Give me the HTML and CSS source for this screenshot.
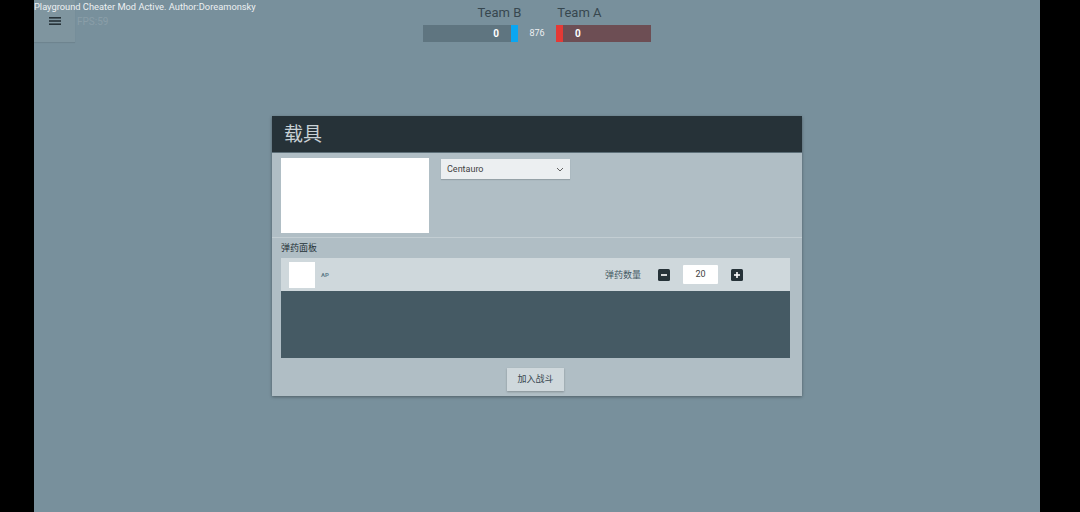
FILE: index.html
```html
<!DOCTYPE html>
<html>
<head>
<meta charset="utf-8">
<link rel="stylesheet" href="styles.css">
</head>
<body>
<div class="screen">
  <div class="letterbox"></div>
  <div class="stage">
    <div class="hud-info">
      <div class="mod-text">Playground Cheater Mod Active. Author:Doreamonsky</div>
      <div class="hud-row">
        <div class="menu-btn">
          <svg width="12" height="10" viewBox="0 0 12 10"><rect x="0" y="1" width="12" height="1.6" fill="#263238"/><rect x="0" y="4.2" width="12" height="1.6" fill="#263238"/><rect x="0" y="7.4" width="12" height="1.6" fill="#263238"/></svg>
        </div>
        <div class="fps">FPS:59</div>
      </div>
    </div>

    <div class="scoreboard">
      <div class="team-names">
        <span class="team-name">Team B</span>
        <span class="team-name">Team A</span>
      </div>
      <div class="bars">
        <div class="bar bar-b"><span class="score">0</span><span class="mark mark-b"></span></div>
        <div class="timer">876</div>
        <div class="bar bar-a"><span class="mark mark-a"></span><span class="score">0</span></div>
      </div>
    </div>

    <div class="panel">
      <div class="panel-header">载具</div>
      <div class="vehicle-row">
        <div class="preview"></div>
        <div class="select">
          <span>Centauro</span>
          <svg width="8" height="5" viewBox="0 0 8 5"><path d="M1 1 L4 4 L7 1" fill="none" stroke="#616161" stroke-width="1"/></svg>
        </div>
      </div>
      <div class="ammo-section">
        <div class="section-label">弹药面板</div>
        <div class="ammo-list">
          <div class="ammo-item">
            <div class="ammo-icon"></div>
            <div class="ammo-name">AP</div>
            <div class="ammo-qty-label">弹药数量</div>
            <div class="step-btn">
              <svg width="12" height="12" viewBox="0 0 12 12"><rect width="12" height="12" rx="1.5" fill="#263238"/><rect x="3" y="5.2" width="6" height="1.6" fill="#fff"/></svg>
            </div>
            <div class="qty-input">20</div>
            <div class="step-btn">
              <svg width="12" height="12" viewBox="0 0 12 12"><rect width="12" height="12" rx="1.5" fill="#263238"/><rect x="3" y="5.2" width="6" height="1.6" fill="#fff"/><rect x="5.2" y="3" width="1.6" height="6" fill="#fff"/></svg>
            </div>
          </div>
          <div class="ammo-empty"></div>
        </div>
      </div>
      <div class="panel-footer">
        <div class="join-btn">加入战斗</div>
      </div>
    </div>
  </div>
  <div class="letterbox right"></div>
</div>
</body>
</html>
```
FILE: styles.css
```css
html, body {
  margin: 0;
  padding: 0;
  width: 1080px;
  height: 512px;
  overflow: hidden;
  background: #000;
  font-family: Roboto, "Noto Sans CJK SC", sans-serif;
}
.screen {
  display: flex;
  width: 1080px;
  height: 512px;
}
.letterbox {
  width: 34px;
  background: #000;
  flex: none;
}
.letterbox.right {
  width: 40px;
}
.stage {
  position: relative;
  flex: 1;
  background: #78909c;
  display: flex;
  flex-direction: column;
  align-items: center;
}
.hud-info {
  position: absolute;
  left: 0;
  top: 0;
}
.mod-text {
  position: absolute;
  left: 0;
  top: 1px;
  font-size: 9.3px;
  line-height: 12px;
  color: #eceff1;
  white-space: nowrap;
  z-index: 2;
}
.hud-row {
  display: flex;
  align-items: center;
}
.menu-btn {
  width: 41px;
  height: 42px;
  background: #7f959f;
  display: flex;
  align-items: center;
  justify-content: center;
  box-shadow: 0 1px 1px rgba(0,0,0,0.08);
}
.fps {
  margin-left: 2px;
  font-size: 10px;
  color: #8a9ea8;
}
.scoreboard {
  position: absolute;
  top: 4px;
  left: 389px;
  width: 228px;
}
.team-names {
  display: flex;
  justify-content: center;
  gap: 36px;
  height: 17px;
  padding-left: 5px;
}
.team-name {
  font-size: 13px;
  line-height: 17px;
  color: #37474f;
}
.bars {
  display: flex;
  align-items: stretch;
  height: 17px;
  margin-top: 4px;
}
.bar {
  width: 95px;
  display: flex;
  align-items: center;
}
.bar-b {
  background: #5f7580;
  justify-content: flex-end;
}
.bar-a {
  background: #6d4e54;
}
.mark {
  width: 7px;
  height: 100%;
}
.mark-b { background: #0aa6f2; margin-left: 12px; }
.mark-a { background: #e53935; margin-right: 12px; }
.score {
  font-size: 10px;
  font-weight: bold;
  color: #fff;
}
.timer {
  flex: 1;
  text-align: center;
  font-size: 9px;
  line-height: 17px;
  color: #eceff1;
}
.panel {
  margin-top: 116px;
  width: 530px;
  background: #b0bec5;
  box-shadow: 0 1px 3px rgba(0,0,0,0.35);
}
.panel-header {
  height: 36px;
  background: #263238;
  border-bottom: 1px solid #5d6f78;
  color: #c8d1d5;
  font-size: 19px;
  line-height: 38px;
  padding-left: 12px;
}
.vehicle-row {
  display: flex;
  gap: 12px;
  padding: 5px 9px 4px;
  border-bottom: 1px solid #c3ced3;
}
.preview {
  width: 148px;
  height: 75px;
  background: #fff;
}
.select {
  margin-top: 1px;
  width: 129px;
  height: 20px;
  background: #eceff1;
  box-shadow: 0 1px 1px rgba(0,0,0,0.15);
  display: flex;
  align-items: center;
  justify-content: space-between;
  padding: 0 6px;
  box-sizing: border-box;
  font-size: 9px;
  color: #424242;
}
.ammo-section {
  padding: 3px 12px 0 9px;
}
.section-label {
  font-size: 9px;
  line-height: 14px;
  color: #263238;
}
.ammo-list {
  margin-top: 3px;
}
.ammo-item {
  height: 33px;
  background: #cfd8dc;
  display: flex;
  align-items: center;
  padding-left: 8px;
  padding-right: 47px;
}
.ammo-icon {
  width: 26px;
  height: 26px;
  background: #fff;
}
.ammo-name {
  margin-left: 6px;
  font-size: 6px;
  font-weight: bold;
  color: #607d8b;
  flex: 1;
}
.ammo-qty-label {
  font-size: 9px;
  color: #455a64;
  margin-right: 17px;
}
.step-btn {
  width: 12px;
  height: 12px;
  display: flex;
}
.qty-input {
  width: 35px;
  height: 19px;
  background: #fff;
  margin: 0 13px;
  font-size: 9px;
  line-height: 19px;
  text-align: center;
  color: #424242;
  border-radius: 1px;
}
.ammo-empty {
  height: 67px;
  background: #455a64;
}
.panel-footer {
  display: flex;
  justify-content: center;
  padding: 10px 0 5px;
}
.join-btn {
  width: 57px;
  height: 23px;
  margin-right: 3px;
  background: #cfd8dc;
  box-shadow: 0 1px 2px rgba(0,0,0,0.25);
  font-size: 9px;
  line-height: 23px;
  text-align: center;
  color: #37474f;
}
```
